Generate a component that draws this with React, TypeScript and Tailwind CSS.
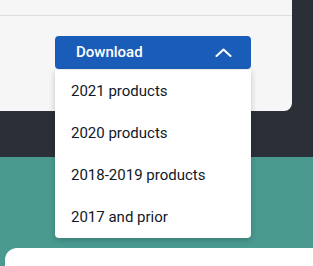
const items = ['2021 products', '2020 products', '2018-2019 products', '2017 and prior'];

export default function App() {
  return (
    <div className="relative h-[266px] w-[313px] overflow-hidden font-['Roboto',sans-serif]">
      <div className="h-[157px] bg-[#2b2f38]">
        <div className="h-[111px] w-[292px] rounded-br-lg bg-[#f6f6f6]">
          <div className="h-[16px] border-b border-[#dedede]" />
          <div className="pl-[55px] pt-[20px]">
            <button className="flex h-[33px] w-[196px] items-center justify-between rounded-[4px] bg-[#1a5db8] pl-[21px] pr-[19px] text-[15px] font-medium text-white">
              Download
              <svg width="17" height="9" viewBox="0 0 17 9" fill="none" stroke="currentColor" strokeWidth="2" strokeLinecap="round" strokeLinejoin="round">
                <polyline points="1.5,8 8.5,1.5 15.5,8" />
              </svg>
            </button>
          </div>
        </div>
      </div>
      <div className="h-[109px] bg-[#4a9a90] pl-[5px] pt-[91px]">
        <div className="h-full rounded-tl-xl bg-white" />
      </div>

      <div className="absolute left-[55px] top-[70px] w-[196px] rounded-b-[4px] bg-white shadow-[0_2px_6px_rgba(0,0,0,0.2)]">
        {items.map((item) => (
          <div key={item} className="flex h-[42px] items-center pl-[16px] text-[15px] text-[#111827]">
            {item}
          </div>
        ))}
      </div>
    </div>
  );
}
